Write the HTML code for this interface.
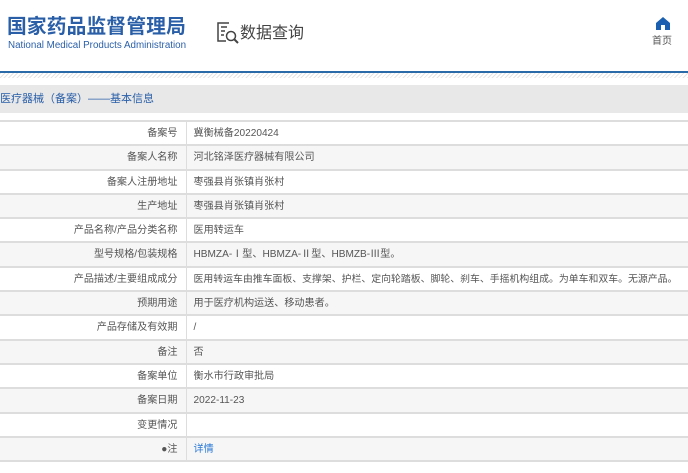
<!DOCTYPE html>
<html><head><meta charset="utf-8"><style>
*{margin:0;padding:0;box-sizing:border-box}
body{width:688px;height:473px;overflow:hidden;background:#fff;font-family:"Liberation Sans","Noto Sans CJK SC",sans-serif;position:relative}
.t1{position:absolute;left:7px;top:13px;font-size:19.7px;font-weight:bold;color:#2a5fa8;font-family:"Noto Sans CJK SC",sans-serif;line-height:24px;letter-spacing:0.2px}
.t2{position:absolute;left:8px;top:40px;font-size:9.8px;color:#2a5fa8;line-height:11px}
.q{position:absolute;left:240px;top:21px;font-size:16px;color:#444;line-height:20px;font-family:"Noto Sans CJK SC",sans-serif}
.home{position:absolute;left:652px;top:36px;font-size:10px;color:#555;line-height:12px}
.bl{position:absolute;left:0;top:71px;width:688px;height:2px;background:#2a6aa8}
.st{position:absolute;left:0;top:73px;width:688px;height:5px;background:repeating-linear-gradient(135deg,#e4e4e4 0 1px,#fff 1px 3px)}
.sec{position:absolute;left:0;top:85px;width:688px;height:28px;background:#e8e8e8;font-size:11px;color:#2a5fa8;line-height:28px}
table{position:absolute;left:0;top:120px;width:688px;border-collapse:collapse;table-layout:fixed;font-size:10.1px;color:#555;font-family:"Liberation Sans","Noto Sans CJK SC",sans-serif}
td{border-top:2px solid #ddd;padding:6px 0 4px 7px;white-space:nowrap;line-height:12.3px;overflow:hidden}
td.l{text-align:right;border-right:1px solid #ddd;padding-right:8px;padding-left:0}
td.s{font-size:9.9px}
tr:nth-child(even) td{background:#f6f6f6}
tr:last-child td{border-bottom:2px solid #ddd}
a{color:#2a7ad8;text-decoration:none}
</style></head><body>
<div class="t1">国家药品监督管理局</div>
<div class="t2">National Medical Products Administration</div>
<svg style="position:absolute;left:216px;top:21px" width="24" height="24" viewBox="0 0 24 24" fill="none" stroke="#444" stroke-width="1.5"><path d="M13 2H2v18h8"/><path d="M5 6h6M5 10h4M5 14h3"/><circle cx="15" cy="15" r="4.5"/><path d="M18.5 18.5l3.5 3.5" stroke-width="2"/></svg>
<div class="q">数据查询</div>
<svg style="position:absolute;left:656px;top:17px" width="14" height="13" viewBox="0 0 14 13"><path d="M7 0L0 6v7h5V8h4v5h5V6z" fill="#1a5fb0"/></svg>
<div class="home">首页</div>
<div class="bl"></div><div class="st"></div>
<div class="sec">医疗器械（备案）——基本信息</div>
<table>
<colgroup><col style="width:186px"><col style="width:502px"></colgroup>
<tr><td class="l">备案号</td><td>冀衡械备20220424</td></tr>
<tr><td class="l">备案人名称</td><td>河北铭泽医疗器械有限公司</td></tr>
<tr><td class="l">备案人注册地址</td><td>枣强县肖张镇肖张村</td></tr>
<tr><td class="l">生产地址</td><td>枣强县肖张镇肖张村</td></tr>
<tr><td class="l">产品名称/产品分类名称</td><td>医用转运车</td></tr>
<tr><td class="l">型号规格/包装规格</td><td>HBMZA-Ⅰ型、HBMZA-Ⅱ型、HBMZB-Ⅲ型。</td></tr>
<tr><td class="l">产品描述/主要组成成分</td><td class="s">医用转运车由推车面板、支撑架、护栏、定向轮踏板、脚轮、刹车、手摇机构组成。为单车和双车。无源产品。</td></tr>
<tr><td class="l">预期用途</td><td>用于医疗机构运送、移动患者。</td></tr>
<tr><td class="l">产品存储及有效期</td><td>/</td></tr>
<tr><td class="l">备注</td><td>否</td></tr>
<tr><td class="l">备案单位</td><td>衡水市行政审批局</td></tr>
<tr><td class="l">备案日期</td><td>2022-11-23</td></tr>
<tr><td class="l">变更情况</td><td></td></tr>
<tr><td class="l">●注</td><td><a>详情</a></td></tr>
</table>
</body></html>
